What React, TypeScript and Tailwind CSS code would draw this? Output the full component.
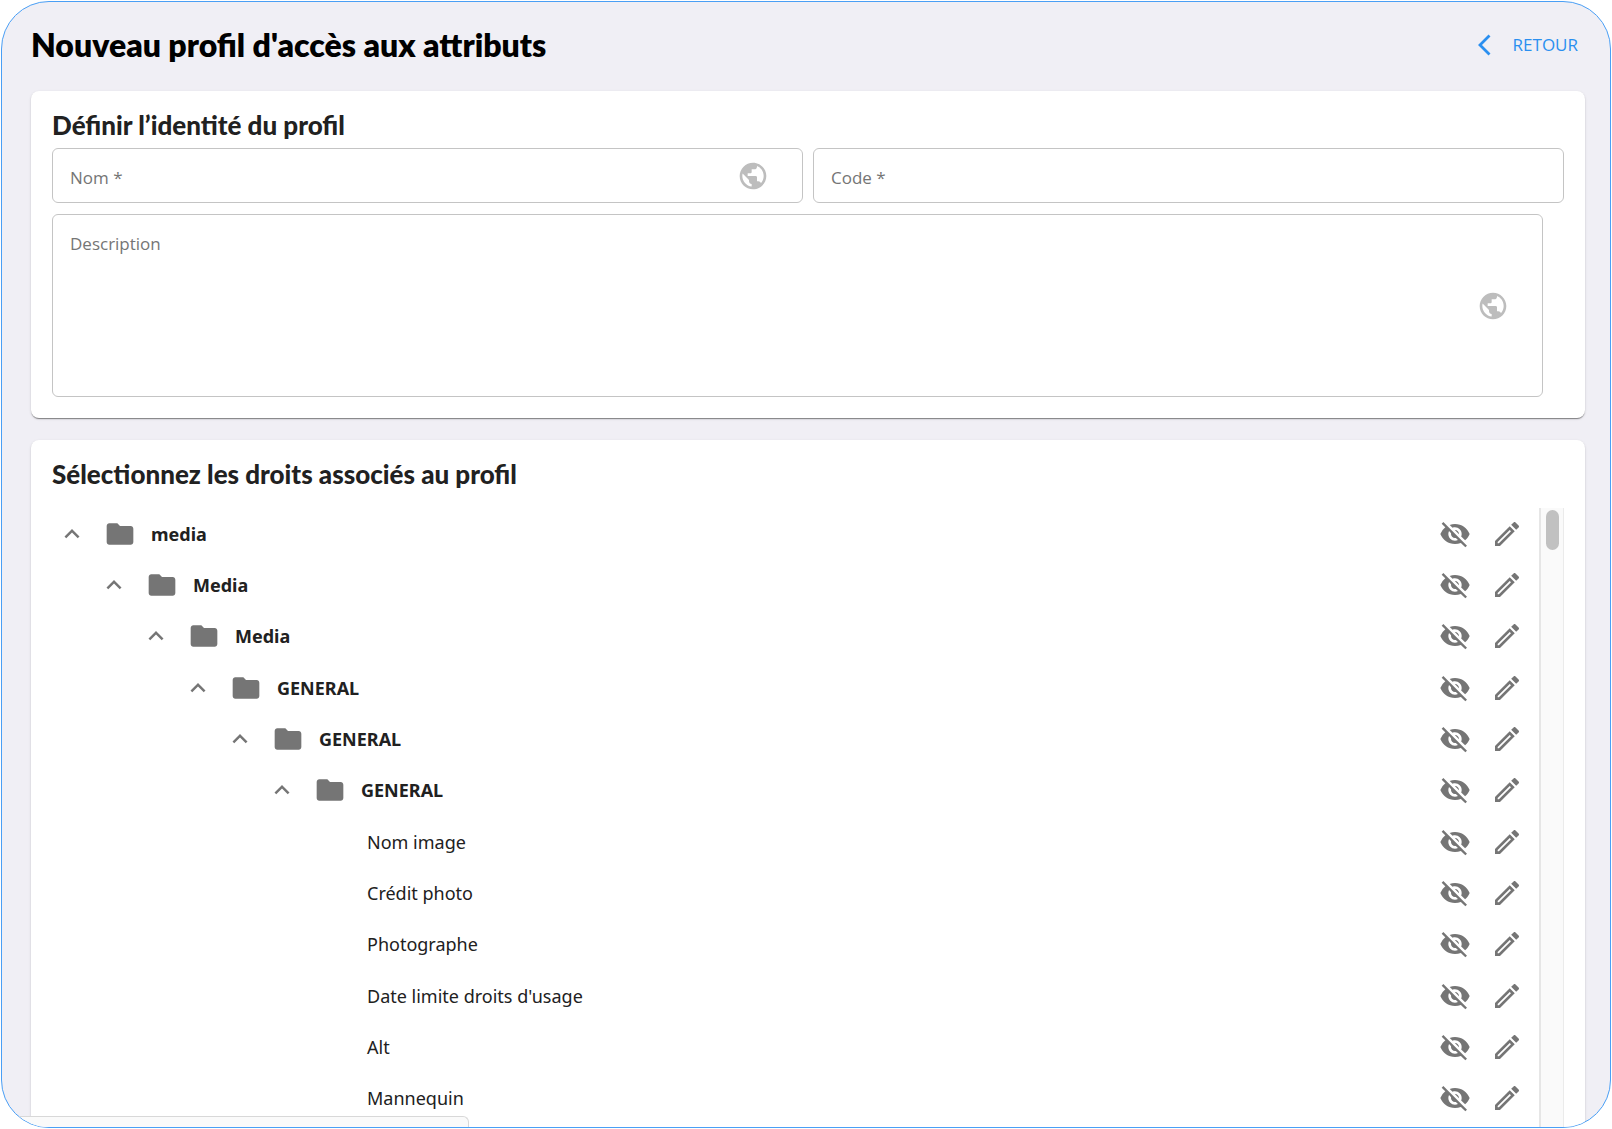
import { useState } from "react";
import {
  MdEdit,
  MdExpandLess,
  MdFolder,
  MdOutlineEdit,
  MdPublic,
  MdVisibility,
  MdVisibilityOff,
} from "react-icons/md";

type TreeRow = {
  id: string;
  label: string;
  level: number;
  leaf?: boolean;
};

const ROWS: TreeRow[] = [
  { id: "root", label: "media", level: 0 },
  { id: "family", label: "Media", level: 1 },
  { id: "model", label: "Media", level: 2 },
  { id: "tab", label: "GENERAL", level: 3 },
  { id: "section", label: "GENERAL", level: 4 },
  { id: "group", label: "GENERAL", level: 5 },
  { id: "name", label: "Nom image", level: 6, leaf: true },
  { id: "credit", label: "Crédit photo", level: 6, leaf: true },
  { id: "photographer", label: "Photographe", level: 6, leaf: true },
  { id: "deadline", label: "Date limite droits d'usage", level: 6, leaf: true },
  { id: "alt", label: "Alt", level: 6, leaf: true },
  { id: "model-name", label: "Mannequin", level: 6, leaf: true },
];

const INDENT = 42;

const Row = ({ row }: { row: TreeRow }) => {
  const [visible, setVisible] = useState(false);
  const [editable, setEditable] = useState(false);

  return (
    <li className="flex h-[51px] items-center justify-between pr-4 font-['Noto_Sans',sans-serif] [&:nth-child(3n)]:h-[52px]">
      <div
        className="flex items-center"
        style={{ paddingLeft: row.level * INDENT }}
      >
        {row.leaf ? (
          <span className="pl-[63px] text-lg text-[#212121]">{row.label}</span>
        ) : (
          <>
            <button
              type="button"
              aria-label="Replier"
              className="flex w-10 justify-center text-[#757575]"
            >
              <MdExpandLess size={30} />
            </button>
            <MdFolder size={32} className="ml-3 text-[#757575]" />
            <span className="ml-[15px] text-lg font-bold text-[#212121]">
              {row.label}
            </span>
          </>
        )}
      </div>
      <div className="flex items-center gap-5 text-[#757575]">
        <button
          type="button"
          aria-label="Visibilité"
          onClick={() => setVisible(!visible)}
        >
          {visible ? <MdVisibility size={32} /> : <MdVisibilityOff size={32} />}
        </button>
        <button
          type="button"
          aria-label="Modification"
          onClick={() => setEditable(!editable)}
        >
          {editable ? <MdEdit size={32} /> : <MdOutlineEdit size={32} />}
        </button>
      </div>
    </li>
  );
};

const FIELD =
  "flex items-center rounded-md border border-[#c4c4c4] bg-white px-[17px]";
const INPUT =
  "min-w-0 flex-1 bg-transparent text-[17px] text-[#212121] outline-none placeholder:text-[#757575]";
const CARD =
  "rounded-lg bg-white px-[21px] pt-[18px] shadow-[0_2px_1px_-1px_rgba(0,0,0,0.3),0_1px_1px_0_rgba(0,0,0,0.16),0_1px_3px_0_rgba(0,0,0,0.12)]";
const CARD_TITLE = "font-[Lato] text-[26px] leading-8 font-black text-[#212121]";

export default function App() {
  return (
    <div className="h-screen bg-white p-px font-['Open_Sans',sans-serif]">
      <div className="relative h-full overflow-hidden rounded-[48px] border border-[#4a9ff5] bg-[#f0eff5] pr-[25px] pl-[29px]">
        <header className="mb-[3px] flex h-[86px] items-center justify-between pr-[7px]">
          <h1 className="font-[Lato] text-[32px] leading-10 font-extrabold text-black">
            Nouveau profil d'accès aux attributs
          </h1>
          <a
            href="#"
            className="flex items-center gap-[22px] text-[17px] text-[#2a8ff0]"
          >
            <svg width="14" height="22" viewBox="0 0 14 22" fill="none">
              <path
                d="M12.5 1.5 3 11l9.5 9.5"
                stroke="currentColor"
                strokeWidth="2.8"
              />
            </svg>
            RETOUR
          </a>
        </header>

        <main className="flex flex-col gap-[22px]">
          <section className={`${CARD} pb-[21px]`}>
            <h2 className={CARD_TITLE}>Définir l’identité du profil</h2>
            <div className="mt-[7px] grid grid-cols-2 gap-2.5">
              <div className={`${FIELD} h-[55px] pr-[33px]`}>
                <input
                  aria-label="Nom"
                  placeholder="Nom *"
                  className={`${INPUT} pt-1`}
                />
                <MdPublic size={32} className="text-[#bdbdbd]" />
              </div>
              <div className={`${FIELD} h-[55px]`}>
                <input
                  aria-label="Code"
                  placeholder="Code *"
                  className={`${INPUT} pt-1`}
                />
              </div>
            </div>
            <div className={`${FIELD} mt-[11px] mr-[21px] h-[183px] pr-[33px]`}>
              <textarea
                aria-label="Description"
                placeholder="Description"
                className={`${INPUT} h-full resize-none pt-4`}
              />
              <MdPublic size={32} className="text-[#bdbdbd]" />
            </div>
          </section>

          <section className={`${CARD} pb-8`}>
            <h2 className={CARD_TITLE}>Sélectionnez les droits associés au profil</h2>
            <div className="mt-[18px] flex">
              <ul className="flex-1 pb-8">
                {ROWS.map((row) => (
                  <Row key={row.id} row={row} />
                ))}
              </ul>
              <div className="w-[25px] border-r border-l-2 border-r-[#ebebeb] border-l-[#e6e6e6] bg-[#fafafa] pt-0.5">
                <div className="mx-auto h-10 w-[13px] rounded-full bg-[#c1c1c1]" />
              </div>
            </div>
          </section>
        </main>

        <div className="absolute bottom-0 left-0 h-[11px] w-[467px] rounded-tr-md border-t border-r border-[#d8d8d8] bg-[#fafafa]" />
      </div>
    </div>
  );
}
